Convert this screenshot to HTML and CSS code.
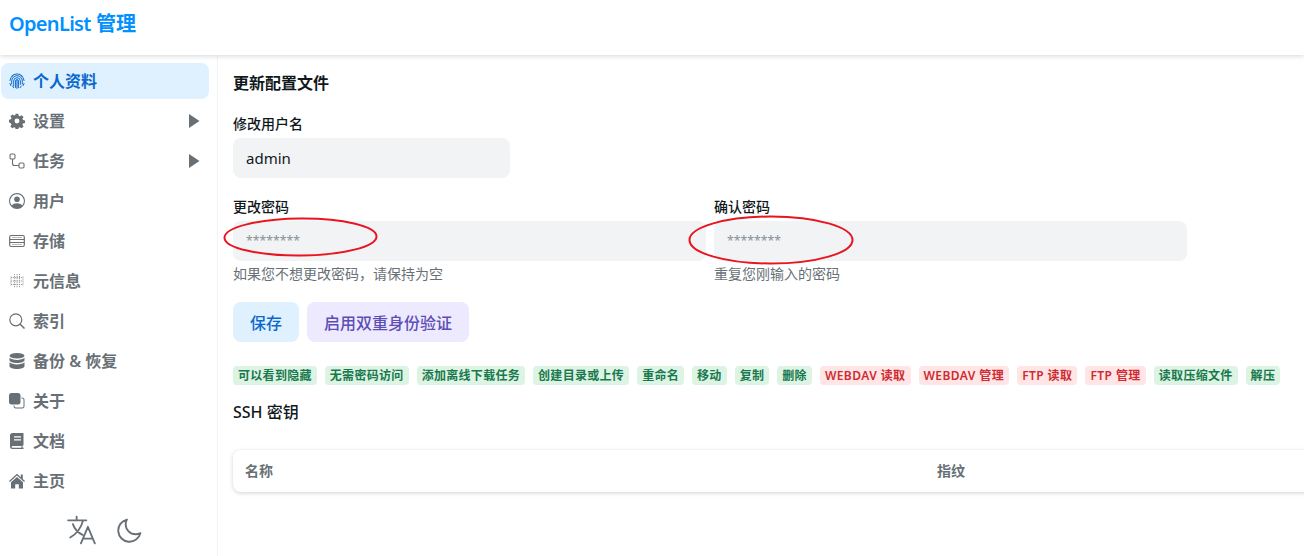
FILE: index.html
```html
<!DOCTYPE html>
<html lang="zh-CN">
<head>
<meta charset="utf-8">
<title>OpenList 管理</title>
<link rel="stylesheet" href="styles.css">
</head>
<body>
<header class="topbar"><span class="logo"><span class="brand">OpenList</span> 管理</span></header>
<div class="shell">
  <aside class="sidebar">
    <nav class="menu">
      <a class="item active">
        <svg class="ico" viewBox="0 0 16 16" fill="none" stroke="currentColor" stroke-width="1" stroke-linecap="round"><path d="M2.500 3.200A7.300 7.300 0 0 1 13.500 3.200"/><path d="M.9 7.500A7.100 7.100 0 0 1 4 2.500M12 2.500A7.100 7.100 0 0 1 15.100 7.500"/><path d="M2.700 11V8a5.300 5.300 0 0 1 10.600 0v3"/><path d="M4.700 13V8a3.300 3.300 0 0 1 6.600 0v3.500"/><path d="M6.600 14.500V8a1.400 1.400 0 0 1 2.800 0v6.500"/><path d="M8 7.500v8M1 10.500l.8 2M15 10.500l-.8 2M12.300 13l-1.300 1.800M3.500 13l1.300 1.800"/></svg>
        <span>个人资料</span>
      </a>
      <a class="item">
        <svg class="ico" viewBox="0 0 16 16" fill="currentColor"><path fill-rule="evenodd" d="M6.600 0h2.800l.5 2.200 1.300.6 2-1.200 2 2-1.200 2 .6 1.300 2.200.5v2.800l-2.200.5-.6 1.300 1.200 2-2 2-2-1.200-1.300.6-.5 2.200H6.600l-.5-2.200-1.300-.6-2 1.200-2-2 1.200-2-.6-1.300L-.800 9.400V6.600l2.200-.5.6-1.300-1.200-2 2-2 2 1.200 1.300-.6zM8 5.300a2.700 2.700 0 1 0 0 5.400 2.700 2.700 0 0 0 0-5.400z" transform="translate(.7 .7) scale(.91)"/></svg>
        <span>设置</span>
        <svg class="arrow" viewBox="0 0 12 16" fill="currentColor"><path d="M1 1v14L11.500 8z"/></svg>
      </a>
      <a class="item">
        <svg class="ico" viewBox="0 0 16 16" fill="none" stroke="currentColor" stroke-width="1.100"><rect x="1" y="1" width="5" height="5" rx="1.200"/><rect x="10" y="10" width="5" height="5" rx="1.200"/><path d="M3.500 6v4.500a2 2 0 0 0 2 2H10"/></svg>
        <span>任务</span>
        <svg class="arrow" viewBox="0 0 12 16" fill="currentColor"><path d="M1 1v14L11.500 8z"/></svg>
      </a>
      <a class="item">
        <svg class="ico" viewBox="0 0 16 16" fill="currentColor"><path fill-rule="evenodd" d="M8 0a8 8 0 1 1 0 16A8 8 0 0 1 8 0zm0 1.200a6.800 6.800 0 0 0-5.200 11.200C3.800 11 5.800 10.300 8 10.300s4.200.7 5.200 2.100A6.800 6.800 0 0 0 8 1.200z"/><circle cx="8" cy="6.300" r="2.800"/></svg>
        <span>用户</span>
      </a>
      <a class="item">
        <svg class="ico" viewBox="0 0 16 16" fill="none" stroke="currentColor" stroke-width="1.200"><rect x=".7" y="2.500" width="14.600" height="11" rx="1.500"/><path d="M.7 6.500h14.600M.7 9.500h14.600" /><path d="M3 4.500h10M3 11.500h10" stroke-width=".8" opacity=".6"/></svg>
        <span>存储</span>
      </a>
      <a class="item">
        <svg class="ico" viewBox="0 0 16 16" fill="none" stroke="currentColor" stroke-width="1" stroke-dasharray="1.200 .8" opacity=".65"><path d="M5.500 1v14M10.500 1v14M8 1v14M2 4.500h12M2 8h12M2 11.500h12M2 3.500v9M14 3.500v9"/></svg>
        <span>元信息</span>
      </a>
      <a class="item">
        <svg class="ico" viewBox="0 0 16 16" fill="none" stroke="currentColor" stroke-width="1.200"><circle cx="6.800" cy="6.800" r="6"/><path d="M11.200 11.200 15.500 15.500" stroke-width="1.500"/></svg>
        <span>索引</span>
      </a>
      <a class="item">
        <svg class="ico" viewBox="0 0 16 16" fill="currentColor"><ellipse cx="8" cy="2.800" rx="7.500" ry="2.800"/><path d="M.5 4.800v2.400C.5 8.700 3.900 10 8 10s7.500-1.300 7.500-2.800V4.800C14 6.200 11.200 6.900 8 6.900S2 6.200.5 4.800zM.5 9.300v3.900C.5 14.700 3.900 16 8 16s7.500-1.300 7.500-2.800V9.300C14 10.700 11.200 11.400 8 11.400S2 10.700.5 9.300z"/></svg>
        <span>备份 &amp; 恢复</span>
      </a>
      <a class="item">
        <svg class="ico" viewBox="0 0 16 16" fill="currentColor"><rect x="0" y="0" width="11.500" height="11.500" rx="2.500"/><path d="M12.500 4.500h.8c1.200 0 2.200 1 2.200 2.200v6.600c0 1.200-1 2.200-2.200 2.200H6.700c-1.200 0-2.200-1-2.200-2.200v-.8h1v.8c0 .7.500 1.200 1.200 1.200h6.600c.7 0 1.200-.5 1.200-1.200V6.700c0-.7-.5-1.200-1.200-1.200h-.8z"/></svg>
        <span>关于</span>
      </a>
      <a class="item">
        <svg class="ico" viewBox="0 0 16 16" fill="currentColor"><path fill-rule="evenodd" d="M3.500 0H14.500v12.500h-1v2H14.500V16H3.500A2.500 2.500 0 0 1 1 13.500v-11A2.500 2.500 0 0 1 3.500 0zM5 3.300v1.200h7V3.300zm0 3v1.200h7V6.300zM3.500 13a.8.8 0 0 0 0 1.700h9V13z"/></svg>
        <span>文档</span>
      </a>
      <a class="item">
        <svg class="ico" viewBox="0 0 16 16" fill="currentColor"><path d="M8 .8 0 8l.9.9L8 2.600l7.100 6.300.9-.9-2.200-2V1.500h-2v2.700z"/><path d="M8 3.900 2 9.200V15.500h4.200v-4.200h3.600v4.200H14V9.200z"/></svg>
        <span>主页</span>
      </a>
    </nav>
    <div class="tools">
      <svg class="tool" viewBox="0 0 28 28" fill="none" stroke="currentColor" stroke-width="1.700" stroke-linecap="round" stroke-linejoin="round"><path d="M13 26.500 19.500 11 26 26.500M15 22h9M1 5h17M9 1.500V5M15 5c-1.500 6-6 12.500-12 16M5.500 8.500c1.500 4.500 5 8 9 10"/></svg>
      <svg class="tool moon" viewBox="0 0 24 24" fill="none" stroke="currentColor" stroke-width="1.800" stroke-linecap="round" stroke-linejoin="round"><path d="M9.500 1.500a10.800 10.800 0 1 0 13 13c-1.500.8-3 1.100-4.700 1.100A9.600 9.600 0 0 1 8.300 6.100c0-1.700.4-3.200 1.200-4.600z"/></svg>
    </div>
  </aside>
  <main class="content">
    <h1 class="title">更新配置文件</h1>
    <div class="field username">
      <label class="label">修改用户名</label>
      <div class="input value">admin</div>
    </div>
    <div class="pair">
      <div class="field">
        <label class="label">更改密码</label>
        <div class="input placeholder">********</div>
        <p class="help">如果您不想更改密码，请保持为空</p>
      </div>
      <div class="field">
        <label class="label">确认密码</label>
        <div class="input placeholder">********</div>
        <p class="help">重复您刚输入的密码</p>
      </div>
    </div>
    <div class="buttons">
      <button class="btn save">保存</button>
      <button class="btn twofa">启用双重身份验证</button>
    </div>
    <div class="tags">
      <span class="tag ok">可以看到隐藏</span>
      <span class="tag ok">无需密码访问</span>
      <span class="tag ok">添加离线下载任务</span>
      <span class="tag ok">创建目录或上传</span>
      <span class="tag ok">重命名</span>
      <span class="tag ok">移动</span>
      <span class="tag ok">复制</span>
      <span class="tag ok">删除</span>
      <span class="tag no">WEBDAV 读取</span>
      <span class="tag no">WEBDAV 管理</span>
      <span class="tag no">FTP 读取</span>
      <span class="tag no">FTP 管理</span>
      <span class="tag ok">读取压缩文件</span>
      <span class="tag ok">解压</span>
    </div>
    <h2 class="subtitle">SSH 密钥</h2>
    <div class="table">
      <span class="th name">名称</span>
      <span class="th">指纹</span>
    </div>
  </main>
</div>
<svg class="marks" width="1304" height="556" viewBox="0 0 1304 556" fill="none" stroke="#e8141f" stroke-width="2">
  <ellipse cx="300.500" cy="237" rx="76" ry="18.500" transform="rotate(-.5 300.500 237)"/>
  <ellipse cx="771" cy="240" rx="81.500" ry="23.500"/>
</svg>
</body>
</html>
```

FILE: styles.css
```css
* { box-sizing: border-box; }
html, body { margin: 0; height: 100%; overflow: hidden; }
body {
  position: relative;
  background: #fff;
  color: #11181c;
  font-family: "Noto Sans", "Noto Sans CJK SC", sans-serif;
  font-size: 16px;
  line-height: 1.5;
}
.topbar {
  position: relative;
  z-index: 2;
  height: 55px;
  display: flex;
  align-items: center;
  padding: 0 0 7px 9px;
  background: #fff;
  box-shadow: 0 1px 5px rgba(0, 0, 0, .16);
}
.logo { color: #0091ff; font-size: 20px; font-weight: 600; }
.brand { letter-spacing: -.7px; }
.shell { display: flex; height: 501px; }
.sidebar {
  width: 218px;
  flex: none;
  padding: 8px 8px 0 1px;
  border-right: 1px solid #f1f3f5;
  display: flex;
  flex-direction: column;
}
.menu { display: flex; flex-direction: column; gap: 4px; }
.item {
  height: 36px;
  display: flex;
  align-items: center;
  gap: 8px;
  padding: 0 8px;
  border-radius: 8px;
  color: #687076;
  font-weight: 600;
}
.item.active { background: #dff0ff; color: #0b68cb; }
.ico { width: 16px; height: 16px; flex: none; }
.arrow { width: 12px; height: 16px; margin-left: auto; margin-right: 1px; flex: none; }
.tools {
  display: flex;
  justify-content: center;
  align-items: center;
  gap: 20px;
  margin-top: 16px;
  padding-right: 2px;
  color: #687076;
}
.tool { width: 30px; height: 30px; }
.moon { width: 25px; height: 25px; }
.content { flex: 1; min-width: 0; padding: 16px 0 0 15px; overflow: hidden; }
.title { margin: 0 0 18px; font-size: 16px; font-weight: 600; line-height: 24px; }
.field { display: flex; flex-direction: column; min-width: 0; }
.username { width: 277px; margin-bottom: 18px; }
.label { font-size: 14px; font-weight: 500; line-height: 21px; margin-bottom: 4px; }
.input {
  height: 40px;
  display: flex;
  align-items: center;
  padding: 0 13px;
  border-radius: 8px;
  background: #f1f3f5;
}
.value { font-size: 15px; }
.placeholder { color: #889096; font-size: 12.25px; }
.pair { display: grid; grid-template-columns: 473px 473px; column-gap: 8px; }
.help { margin: 2px 0 0; color: #687076; font-size: 14px; line-height: 21px; }
.buttons { display: flex; gap: 8px; margin-top: 18px; }
.btn {
  height: 40px;
  border: 0;
  border-radius: 8px;
  padding: 0 17px;
  font: 500 16px "Noto Sans", "Noto Sans CJK SC", sans-serif;
}
.save { background: #dff0ff; color: #0b68cb; }
.twofa { background: #ede9fe; color: #5d4db5; }
.tags { display: flex; flex-wrap: nowrap; gap: 8px; margin-top: 24px; white-space: nowrap; }
.tag {
  height: 19px;
  padding: 0 5px;
  border-radius: 4px;
  font-size: 12px;
  font-weight: 600;
  letter-spacing: .3px;
  line-height: 19px;
}
.ok { background: #ddf3e4; color: #18794e; }
.no { background: #ffe5e5; color: #cd2b31; letter-spacing: .42px; }
.subtitle { margin: 15px 0 0; font-size: 16px; font-weight: 500; line-height: 24px; }
.table {
  width: 1200px;
  height: 42px;
  margin-top: 26px;
  display: flex;
  align-items: center;
  padding: 0 0 2px 12px;
  border-radius: 8px;
  box-shadow: 0 1px 4px rgba(0, 0, 0, .18);
}
.th { color: #687076; font-size: 14px; font-weight: 600; }
.name { width: 692px; }
.marks { position: absolute; left: 0; top: 0; z-index: 3; pointer-events: none; }
```
